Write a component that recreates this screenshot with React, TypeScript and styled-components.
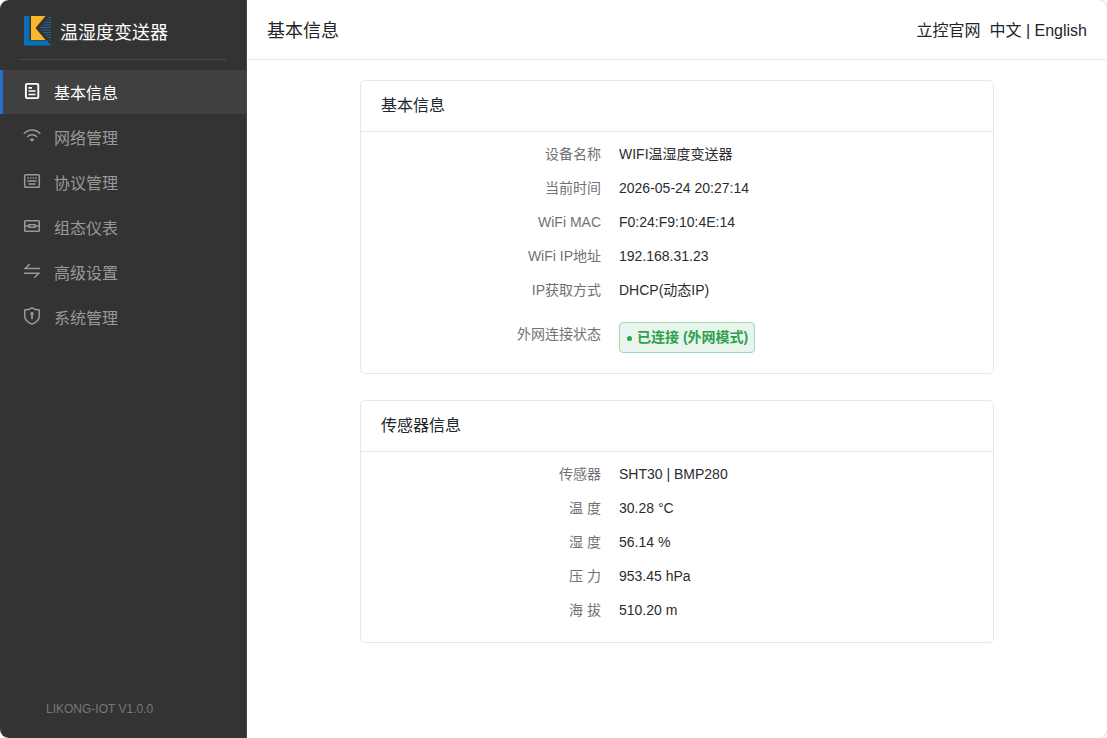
import React from 'react';
import styled, { createGlobalStyle } from 'styled-components';

const GlobalStyle = createGlobalStyle`
  * { box-sizing: border-box; }
  body {
    margin: 0;
    background: #fff;
    color: #212529;
    font-family: "Liberation Sans", "Noto Sans CJK SC", sans-serif;
    font-size: 16px;
  }
`;

const Shell = styled.div`
  display: flex;
  height: 738px;
  overflow: hidden;
  border-radius: 9px;
  background: #fff;
  box-shadow: 0 0 0 1px #e4e4e4;
`;

const Sidebar = styled.aside`
  display: flex;
  flex-direction: column;
  flex: none;
  width: 247px;
  background: #333;
  border-right: 1px solid #4a4a4a;
`;

const Brand = styled.div`
  display: flex;
  align-items: center;
  height: 60px;
  margin: 0 20px 10px;
  padding: 2px 0 0 3px;
  border-bottom: 1px solid #4a4a4a;
`;

const BrandName = styled.span`
  margin: 5px 0 0 8px;
  color: #fff;
  font-size: 18px;
  line-height: 26px;
`;

const Menu = styled.nav`
  display: flex;
  flex-direction: column;
  gap: 1px;
`;

const MenuItem = styled.a<{ $active?: boolean }>`
  display: flex;
  align-items: center;
  height: 44px;
  padding-left: 20px;
  border-left: 3px solid ${(p) => (p.$active ? '#2a6fc9' : 'transparent')};
  background: ${(p) => (p.$active ? '#404040' : 'transparent')};
  color: ${(p) => (p.$active ? '#fff' : '#999')};
`;

const MenuIcon = styled.svg`
  width: 18px;
  height: 18px;
  margin: 0 13px 2px 0;
  fill: none;
  stroke: currentColor;
  stroke-width: 1.5;
`;

const MenuLabel = styled.span`
  padding-top: 4px;
  line-height: 24px;
`;

const Version = styled.div`
  margin-top: auto;
  padding: 0 0 21px 46px;
  color: #777;
  font-size: 12px;
  line-height: 16px;
`;

const Main = styled.main`
  flex: 1;
  min-width: 0;
`;

const TopBar = styled.header`
  display: flex;
  align-items: center;
  justify-content: space-between;
  height: 60px;
  padding: 3px 20px 0;
  border-bottom: 1px solid #e8e8e8;
`;

const PageTitle = styled.div`
  font-size: 18px;
  line-height: 26px;
`;

const Links = styled.div`
  display: flex;
  gap: 9px;
  line-height: 24px;
`;

const Content = styled.div`
  display: flex;
  flex-direction: column;
  gap: 26px;
  width: 634px;
  margin: 20px 0 0 113px;
`;

const Card = styled.section`
  border: 1px solid #e8e8e8;
  border-radius: 5px;
`;

const CardTitle = styled.div`
  height: 51px;
  padding: 13px 20px 0;
  border-bottom: 1px solid #e8e8e8;
  line-height: 24px;
`;

const Rows = styled.div<{ $bottom: number }>`
  padding: 5px 0 ${(p) => p.$bottom}px;
`;

const Row = styled.div<{ $status?: boolean }>`
  display: grid;
  grid-template-columns: 240px 1fr;
  column-gap: 18px;
  align-items: center;
  height: ${(p) => (p.$status ? 61 : 34)}px;
  font-size: 14px;
  line-height: 20px;
`;

const Label = styled.span<{ $raised?: boolean }>`
  color: #707276;
  text-align: right;
  padding-bottom: ${(p) => (p.$raised ? 7 : 0)}px;
`;

const Value = styled.span`
  color: #2a2d30;
`;

const Badge = styled.span`
  display: inline-flex;
  align-items: center;
  justify-self: start;
  height: 31px;
  width: 136px;
  padding: 0 0 1px 7px;
  border: 1px solid #a3d9b1;
  border-radius: 4px;
  background: #e8f5ec;
  color: #2fa14c;
  font-weight: 700;
  white-space: nowrap;
`;

const Dot = styled.i`
  width: 5px;
  height: 5px;
  margin: 3px 5px 0 0;
  border-radius: 50%;
  background: #2fa14c;
`;

const Logo = () => (
  <svg width="29" height="32" viewBox="0 0 29 32">
    <path d="M1 1H6.5V25.5H24L28 30.5H1Z" fill="#0c70b8" />
    <path d="M8 1H22.5L12.5 13L22.5 25H8Z" fill="#fdb52b" />
    <path
      d="M25.5 2.5H28M23.5 5H28M21.4 7.5H28M19.3 10H28M17.2 12.5H28M18.2 15H28M20.3 17.5H28M22.4 20H28M24.5 22.5H28M26.5 25H28"
      stroke="#1b679f"
      strokeWidth="1.2"
    />
  </svg>
);

const menu = [
  {
    label: '基本信息',
    icon: (
      <>
        <rect x="2.9" y="1.9" width="12.4" height="14.2" rx="1.2" strokeWidth="1.9" />
        <path d="M5.5 5.8H9M5.5 9H12.5M5.5 12.5H12.5" strokeWidth="1.7" />
      </>
    ),
  },
  {
    label: '网络管理',
    icon: (
      <>
        <path d="M.8 6.7C5.5 1.7 12.7 1.7 17.3 6.7M4 10C7 7 11.2 7 14.2 10" />
        <path d="M6.6 12.3Q9 10.9 11.4 12.3L9 14.9Z" fill="currentColor" stroke="none" />
      </>
    ),
  },
  {
    label: '协议管理',
    icon: (
      <>
        <rect x="1.7" y="2.7" width="14.6" height="12.6" rx=".8" />
        <path d="M4.3 6H6M7 6H8.5M9.5 6H11M12 6H13.7M4.3 9H13.7M5.5 12H12.5" strokeWidth="1.3" />
      </>
    ),
  },
  {
    label: '组态仪表',
    icon: (
      <>
        <rect x="1.7" y="3.7" width="14.6" height="10.6" rx=".8" />
        <path d="M2 9H6M12 9H16" strokeWidth="1.4" />
        <rect x="6" y="7.7" width="6" height="2.6" strokeWidth="1.4" />
      </>
    ),
  },
  {
    label: '高级设置',
    icon: <path d="M6.8 2L2.2 6.5H17M1 11.3H15.8L11.2 15.8" />,
  },
  {
    label: '系统管理',
    icon: (
      <>
        <path d="M9 .9C11.5 2.4 13.8 3 16.3 3V9C16.3 12.5 13.5 15.4 9 17.2C4.5 15.4 1.7 12.5 1.7 9V3C4.2 3 6.5 2.4 9 .9Z" />
        <path d="M9 8V12.3" strokeWidth="1.7" />
        <circle cx="9" cy="6.7" r="1.7" fill="currentColor" stroke="none" />
      </>
    ),
  },
];

const device = [
  ['设备名称', 'WIFI温湿度变送器'],
  ['当前时间', '2026-05-24 20:27:14'],
  ['WiFi MAC', 'F0:24:F9:10:4E:14'],
  ['WiFi IP地址', '192.168.31.23'],
  ['IP获取方式', 'DHCP(动态IP)'],
];

const sensor = [
  ['传感器', 'SHT30 | BMP280'],
  ['温 度', '30.28 °C'],
  ['湿 度', '56.14 %'],
  ['压 力', '953.45 hPa'],
  ['海 拔', '510.20 m'],
];

const renderRow = ([label, value]: string[]) => (
  <Row key={label}>
    <Label>{label}</Label>
    <Value>{value}</Value>
  </Row>
);

export default function App() {
  return (
    <>
      <GlobalStyle />
      <Shell>
        <Sidebar>
          <Brand>
            <Logo />
            <BrandName>温湿度变送器</BrandName>
          </Brand>
          <Menu>
            {menu.map((m, i) => (
              <MenuItem key={m.label} $active={i === 0}>
                <MenuIcon viewBox="0 0 18 18">{m.icon}</MenuIcon>
                <MenuLabel>{m.label}</MenuLabel>
              </MenuItem>
            ))}
          </Menu>
          <Version>LIKONG-IOT V1.0.0</Version>
        </Sidebar>
        <Main>
          <TopBar>
            <PageTitle>基本信息</PageTitle>
            <Links>
              <span>立控官网</span>
              <span>中文 | English</span>
            </Links>
          </TopBar>
          <Content>
            <Card>
              <CardTitle>基本信息</CardTitle>
              <Rows $bottom={5}>
                {device.map(renderRow)}
                <Row $status>
                  <Label $raised>外网连接状态</Label>
                  <Badge>
                    <Dot />
                    已连接 (外网模式)
                  </Badge>
                </Row>
              </Rows>
            </Card>
            <Card>
              <CardTitle>传感器信息</CardTitle>
              <Rows $bottom={15}>{sensor.map(renderRow)}</Rows>
            </Card>
          </Content>
        </Main>
      </Shell>
    </>
  );
}
